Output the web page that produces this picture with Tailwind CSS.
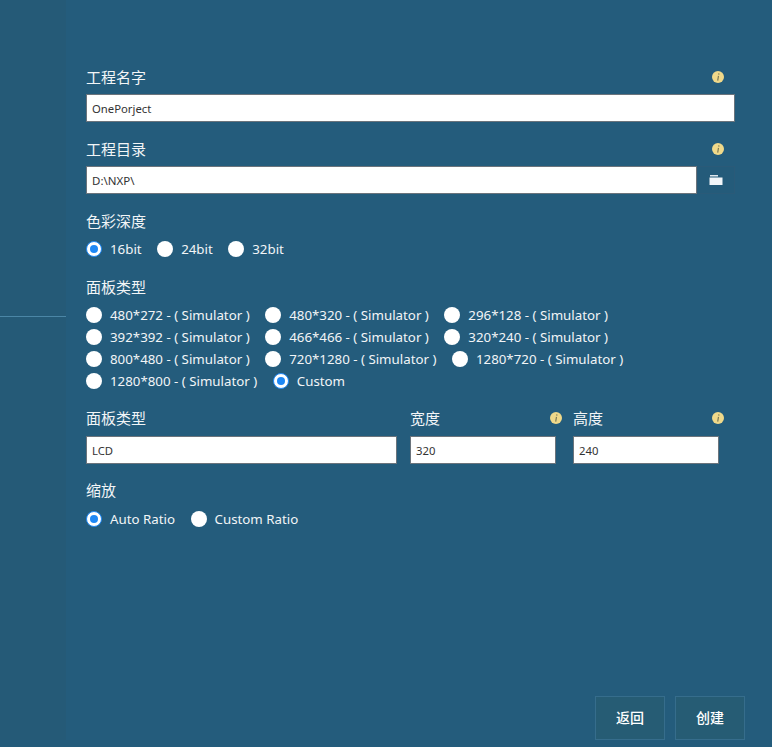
<!DOCTYPE html>
<html lang="zh">
<head>
<meta charset="utf-8">
<script src="https://cdn.jsdelivr.net/npm/@tailwindcss/browser@4"></script>
<title>Project</title>
</head>
<body class="m-0 overflow-hidden">
<div class="flex h-[747px] w-[772px] bg-[#245c7c] text-[13.3px] text-[#f2f5f7] font-['Noto_Sans','Noto_Sans_CJK_SC',sans-serif]">
  <aside class="flex h-[740px] w-[66px] shrink-0 flex-col bg-[#255a77] pt-[316px]">
    <div class="h-px w-full bg-[#4b86a6]"></div>
  </aside>
  <main class="flex h-full min-w-0 flex-1 flex-col pl-5 pt-[66px]">
    <div class="w-[649px]">
      <div class="flex h-[22px] items-center justify-between pr-[11px] text-[15px]"><span>工程名字</span>
        <svg class="size-3" viewBox="0 0 12 12"><circle cx="6" cy="6" r="6" fill="#f0d98a"/><path d="M6.9 2.4l-.15 1.2M6.5 4.8l-.8 4.8" stroke="#7d7a55" stroke-width="1.2" fill="none"/></svg>
      </div>
      <input class="mt-1.5 block h-7 w-full border border-[#6b747c] bg-white px-[5px] text-[11.3px] text-[#333] outline-none" value="OnePorject">

      <div class="mt-4 flex h-[22px] items-center justify-between pr-[11px] text-[15px]"><span>工程目录</span>
        <svg class="size-3" viewBox="0 0 12 12"><circle cx="6" cy="6" r="6" fill="#f0d98a"/><path d="M6.9 2.4l-.15 1.2M6.5 4.8l-.8 4.8" stroke="#7d7a55" stroke-width="1.2" fill="none"/></svg>
      </div>
      <div class="mt-1.5 flex h-7">
        <input class="block h-7 min-w-0 flex-1 border border-[#6b747c] bg-white px-[5px] text-[11.5px] text-[#333] outline-none" value="D:\NXP\">
        <button class="flex h-7 w-[38px] items-center justify-center border border-[#2a5a78] bg-[#245b7a]">
          <svg class="h-[10px] w-[14px]" viewBox="0 0 14 10"><path d="M1 0h8v1.5H1z" fill="#dfe8ee"/><path d="M0.5 2.5h13V10H0.5z" fill="#f2f6f9"/></svg>
        </button>
      </div>

      <div class="mt-4 flex h-[22px] items-center text-[15px]">色彩深度</div>
      <div class="mt-1.5 flex flex-wrap">
        <label class="mr-[15.5px] flex h-[22px] items-center gap-2"><span class="flex size-4 items-center justify-center rounded-full border-[1.5px] border-[#1e88f5] bg-white"><span class="size-2 rounded-full bg-[#1e88f5]"></span></span><span class="pt-0.5">16bit</span></label>
        <label class="mr-[15.5px] flex h-[22px] items-center gap-2"><span class="size-4 rounded-full bg-white"></span><span class="pt-0.5">24bit</span></label>
        <label class="mr-[15.5px] flex h-[22px] items-center gap-2"><span class="size-4 rounded-full bg-white"></span><span class="pt-0.5">32bit</span></label>
      </div>

      <div class="mt-4 flex h-[22px] items-center text-[15px]">面板类型</div>
      <div class="mt-1.5 flex flex-wrap">
        <label class="mr-[15.5px] flex h-[22px] items-center gap-2"><span class="size-4 rounded-full bg-white"></span><span class="pt-0.5">480*272 - ( Simulator )</span></label>
        <label class="mr-[15.5px] flex h-[22px] items-center gap-2"><span class="size-4 rounded-full bg-white"></span><span class="pt-0.5">480*320 - ( Simulator )</span></label>
        <label class="mr-[15.5px] flex h-[22px] items-center gap-2"><span class="size-4 rounded-full bg-white"></span><span class="pt-0.5">296*128 - ( Simulator )</span></label>
        <label class="mr-[15.5px] flex h-[22px] items-center gap-2"><span class="size-4 rounded-full bg-white"></span><span class="pt-0.5">392*392 - ( Simulator )</span></label>
        <label class="mr-[15.5px] flex h-[22px] items-center gap-2"><span class="size-4 rounded-full bg-white"></span><span class="pt-0.5">466*466 - ( Simulator )</span></label>
        <label class="mr-[15.5px] flex h-[22px] items-center gap-2"><span class="size-4 rounded-full bg-white"></span><span class="pt-0.5">320*240 - ( Simulator )</span></label>
        <label class="mr-[15.5px] flex h-[22px] items-center gap-2"><span class="size-4 rounded-full bg-white"></span><span class="pt-0.5">800*480 - ( Simulator )</span></label>
        <label class="mr-[15.5px] flex h-[22px] items-center gap-2"><span class="size-4 rounded-full bg-white"></span><span class="pt-0.5">720*1280 - ( Simulator )</span></label>
        <label class="mr-[15.5px] flex h-[22px] items-center gap-2"><span class="size-4 rounded-full bg-white"></span><span class="pt-0.5">1280*720 - ( Simulator )</span></label>
        <label class="mr-[15.5px] flex h-[22px] items-center gap-2"><span class="size-4 rounded-full bg-white"></span><span class="pt-0.5">1280*800 - ( Simulator )</span></label>
        <label class="mr-[15.5px] flex h-[22px] items-center gap-2"><span class="flex size-4 items-center justify-center rounded-full border-[1.5px] border-[#1e88f5] bg-white"><span class="size-2 rounded-full bg-[#1e88f5]"></span></span><span class="pt-0.5">Custom</span></label>
      </div>

      <div class="mt-[15px] flex">
        <div class="w-[324px]">
          <div class="flex h-[22px] items-center text-[15px]">面板类型</div>
          <input class="mt-[7px] block h-7 w-[311px] border border-[#6b747c] bg-white px-[5px] text-[11.3px] text-[#333] outline-none" value="LCD">
        </div>
        <div class="w-[163px]">
          <div class="flex h-[22px] items-center justify-between pr-[11px] text-[15px]"><span>宽度</span>
            <svg class="size-3" viewBox="0 0 12 12"><circle cx="6" cy="6" r="6" fill="#f0d98a"/><path d="M6.9 2.4l-.15 1.2M6.5 4.8l-.8 4.8" stroke="#7d7a55" stroke-width="1.2" fill="none"/></svg>
          </div>
          <input class="mt-[7px] block h-7 w-[146px] border border-[#6b747c] bg-white px-[5px] text-[11.3px] text-[#333] outline-none" value="320">
        </div>
        <div class="w-[162px]">
          <div class="flex h-[22px] items-center justify-between pr-[11px] text-[15px]"><span>高度</span>
            <svg class="size-3" viewBox="0 0 12 12"><circle cx="6" cy="6" r="6" fill="#f0d98a"/><path d="M6.9 2.4l-.15 1.2M6.5 4.8l-.8 4.8" stroke="#7d7a55" stroke-width="1.2" fill="none"/></svg>
          </div>
          <input class="mt-[7px] block h-7 w-[146px] border border-[#6b747c] bg-white px-[5px] text-[11.3px] text-[#333] outline-none" value="240">
        </div>
      </div>

      <div class="mt-[15px] flex h-[22px] items-center text-[15px]">缩放</div>
      <div class="mt-[7px] flex flex-wrap">
        <label class="mr-[15.5px] flex h-[22px] items-center gap-2"><span class="flex size-4 items-center justify-center rounded-full border-[1.5px] border-[#1e88f5] bg-white"><span class="size-2 rounded-full bg-[#1e88f5]"></span></span><span class="pt-0.5">Auto Ratio</span></label>
        <label class="mr-[15.5px] flex h-[22px] items-center gap-2"><span class="size-4 rounded-full bg-white"></span><span class="pt-0.5">Custom Ratio</span></label>
      </div>
    </div>
    <div class="mt-auto flex justify-end gap-2.5 pb-[7px] pr-[27px]">
      <button class="h-11 w-[70px] border border-[#366d8c] bg-[#265c74] text-sm font-medium text-white">返回</button>
      <button class="h-11 w-[70px] border border-[#366d8c] bg-[#265c74] text-sm font-medium text-white">创建</button>
    </div>
  </main>
</div>
</body>
</html>
